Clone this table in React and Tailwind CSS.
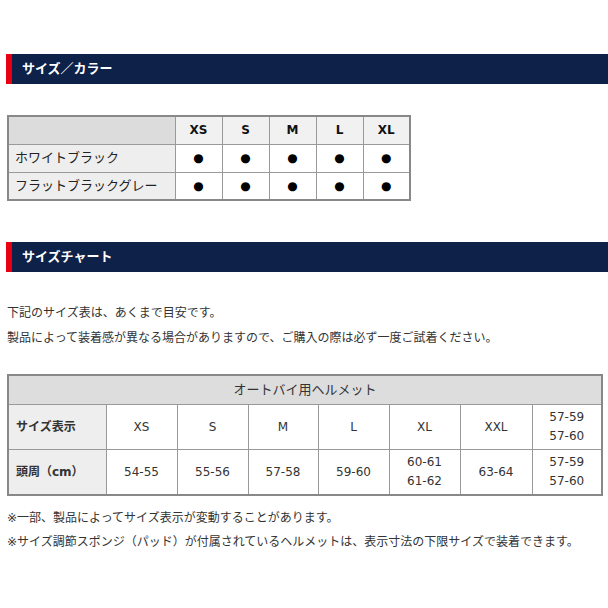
const FONT = "font-['DejaVu_Sans','Noto_Sans_CJK_JP',sans-serif]";

const Bar = ({ title }) => (
  <div className="ml-[6px] h-[30px] flex items-center border-l-[6px] border-[#e60012] bg-[#0e2148]">
    <h2 className="pl-[10px] text-[13px] font-bold text-white">{title}</h2>
  </div>
);

const colors = ["ホワイトブラック", "フラットブラックグレー"];
const sizes1 = ["XS", "S", "M", "L", "XL"];

const sizes2 = ["XS", "S", "M", "L", "XL", "XXL", ["57-59", "57-60"]];
const heads = ["54-55", "55-56", "57-58", "59-60", ["60-61", "61-62"], "63-64", ["57-59", "57-60"]];

const Cell = ({ v }) =>
  Array.isArray(v) ? (
    <div className="flex flex-col leading-[19px]">
      {v.map((t) => (
        <span key={t}>{t}</span>
      ))}
    </div>
  ) : (
    v
  );

export default function App() {
  return (
    <div className={`${FONT} bg-white w-[608px] h-[608px] overflow-hidden text-[#333] pt-[54px]`}>
      <Bar title="サイズ／カラー" />

      <table className="ml-[7px] mt-[31px] w-[403px] table-fixed border-collapse border-2 border-[#888] text-[13px]">
        <colgroup>
          <col className="w-[167px]" />
          {sizes1.map((s) => (
            <col key={s} className="w-[47px]" />
          ))}
        </colgroup>
        <thead>
          <tr className="h-[28px]">
            <th className="bg-[#dcdcdc] border border-[#999]"></th>
            {sizes1.map((s) => (
              <th key={s} className="bg-[#f1f1f1] border border-[#999] text-[12px] font-bold text-[#111]">
                {s}
              </th>
            ))}
          </tr>
        </thead>
        <tbody>
          {colors.map((c) => (
            <tr key={c} className="h-[28px]">
              <td className="bg-[#eeeeee] border border-[#999] pl-[6px] text-[#222]">{c}</td>
              {sizes1.map((s) => (
                <td key={s} className="border border-[#999] text-center text-[12px] text-black">
                  ●
                </td>
              ))}
            </tr>
          ))}
        </tbody>
      </table>

      <div className="mt-[41px]">
        <Bar title="サイズチャート" />
      </div>

      <div className="ml-[7px] mt-[29px] text-[12px] leading-[25px] text-[#333]">
        <p>下記のサイズ表は、あくまで目安です。</p>
        <p>製品によって装着感が異なる場合がありますので、ご購入の際は必ず一度ご試着ください。</p>
      </div>

      <table className="ml-[7px] mt-[23px] w-[594px] table-fixed border-collapse border-2 border-[#888] text-[12px] text-[#333]">
        <colgroup>
          <col className="w-[98px]" />
          <col className="w-[71px]" />
          <col className="w-[71px]" />
          <col className="w-[70px]" />
          <col className="w-[71px]" />
          <col className="w-[71px]" />
          <col className="w-[72px]" />
          <col className="w-[70px]" />
        </colgroup>
        <thead>
          <tr className="h-[29px]">
            <th colSpan={8} className="bg-[#dddddd] border border-[#999] font-normal text-[13px]">
              オートバイ用ヘルメット
            </th>
          </tr>
        </thead>
        <tbody>
          <tr className="h-[45px]">
            <td className="bg-[#eeeeee] border border-[#999] pl-[7px] font-bold text-[12px]">サイズ表示</td>
            {sizes2.map((s, i) => (
              <td key={i} className="border border-[#999] text-center">
                <Cell v={s} />
              </td>
            ))}
          </tr>
          <tr className="h-[46px]">
            <td className="bg-[#eeeeee] border border-[#999] pl-[7px] font-bold text-[12px]">頭周（cm）</td>
            {heads.map((s, i) => (
              <td key={i} className="border border-[#999] text-center">
                <Cell v={s} />
              </td>
            ))}
          </tr>
        </tbody>
      </table>

      <div className="ml-[7px] mt-[10px] text-[12px] leading-[24px] text-[#333]">
        <p>※一部、製品によってサイズ表示が変動することがあります。</p>
        <p>※サイズ調節スポンジ（パッド）が付属されているヘルメットは、表示寸法の下限サイズで装着できます。</p>
      </div>
    </div>
  );
}
